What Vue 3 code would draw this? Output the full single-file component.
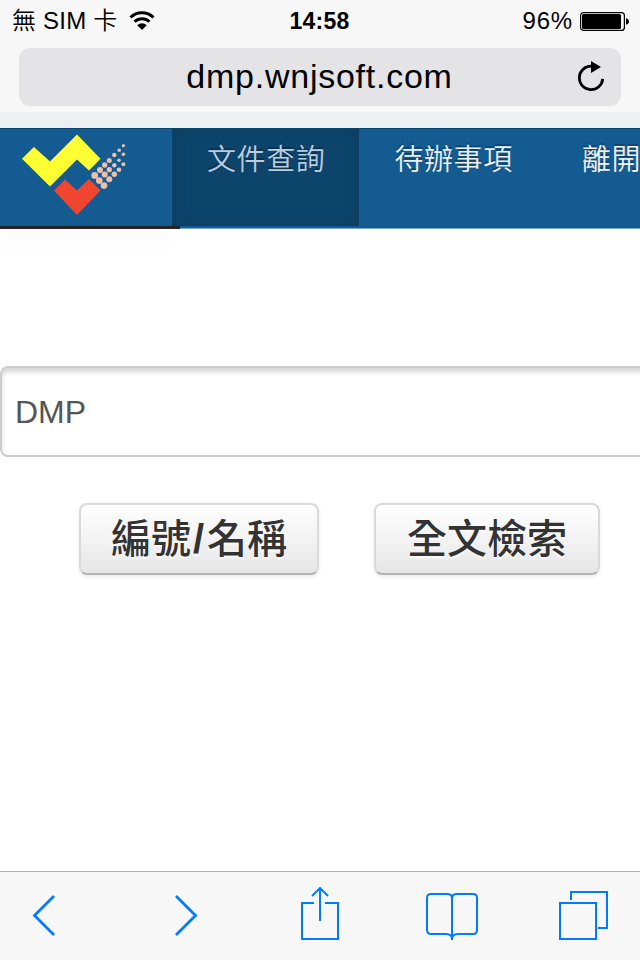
<template>
  <div class="phone">
    <header class="browser">
      <div class="status">
        <div class="carrier">
          <span>無 SIM 卡</span>
          <svg class="wifi" width="26" height="20" viewBox="0 0 26 20">
            <path d="M1.500 6.500a16.500 16.500 0 0 1 23 0" />
            <path d="M5.500 10.700a11 11 0 0 1 15 0" />
            <path class="solid" d="M8.200 14.300a6.800 6.800 0 0 1 9.600 0L13 18.900z" />
          </svg>
        </div>
        <strong class="time">14:58</strong>
        <div class="power">
          <span class="percent">96%</span>
          <svg width="49" height="19" viewBox="0 0 49 19">
            <rect class="case" x=".6" y=".6" width="43.8" height="17.8" rx="3" />
            <rect x="2" y="2" width="39" height="15" rx="1.5" />
            <path d="M46 6.2q3 .8 3 3.3t-3 3.3z" />
          </svg>
        </div>
      </div>
      <div class="address">
        <span class="url">{{ url }}</span>
        <svg class="reload" width="28" height="32" viewBox="0 0 28 32">
          <path class="ring" d="M14 5.2a11.7 11.7 0 1 0 11.7 12.6" />
          <path d="M14 0l10 6-10 6z" />
        </svg>
      </div>
    </header>

    <main class="page">
      <nav class="nav">
        <a class="logo">
          <svg width="106" height="84" viewBox="0 0 106 84">
            <path fill="#ffff33" d="M0 25.700 12 14l16 14.500L55 1.500l23.500 24.200L67 37.500 55 26.500 28 53.500z" />
            <path fill="#f0452e" d="M32 57.500 43 46.500l12 11 12-11.500 11.500 11.500L55 82z" />
            <circle v-for="(d, i) in dots" :key="i" class="dot" :cx="d[0]" :cy="d[1]" :r="d[2]" />
          </svg>
        </a>
        <a v-for="item in menu" :key="item" class="item" :class="{ active: item === current }">{{ item }}</a>
      </nav>

      <form class="search" @submit.prevent>
        <input v-model="keyword" class="keyword" type="text">
        <div class="buttons">
          <button class="btn number" type="submit">編號<b>/</b>名稱</button>
          <button class="btn fulltext" type="submit">全文檢索</button>
        </div>
      </form>
    </main>

    <footer class="toolbar">
      <svg class="arrow back" width="24" height="44" viewBox="0 0 24 44"><path d="M22 3 2.500 22.500 22 42" /></svg>
      <svg class="arrow next" width="24" height="44" viewBox="0 0 24 44"><path d="M2 3l19.500 19.500L2 42" /></svg>
      <svg class="share" width="40" height="54" viewBox="0 0 40 54">
        <path d="M14 16H2v36h36V16H25M20 34V2M12 9l8-8 8 8" />
      </svg>
      <svg class="book" width="52" height="48" viewBox="0 0 52 48">
        <path d="M26 47V5q0-4-5-4H5Q1 1 1 5v32q0 4 4 4h15q6 0 6 5 0-5 6-5h15q4 0 4-4V5q0-4-4-4H31q-5 0-5 4" />
      </svg>
      <svg class="tabs" width="50" height="50" viewBox="0 0 50 50">
        <path d="M1 12h36v36H1zM12 9V1h36v36h-9" />
      </svg>
    </footer>
  </div>
</template>

<script setup>
import { ref } from 'vue'

const url = 'dmp.wnjsoft.com'
const menu = ['文件查詢', '待辦事項', '離開']
const current = ref('文件查詢')
const keyword = ref('DMP')

// x, y, radius
const dots = [
  [72.7, 42.4, 3.4], [77.3, 47.6, 3.3], [82, 52.6, 3.3],
  [78, 37, 3], [82.7, 41.6, 3], [87.3, 46.3, 3],
  [82.7, 32, 2.7], [87.3, 36.7, 2.6], [92.3, 41.2, 2.7],
  [87.3, 27.4, 2.5], [92.3, 32.2, 2.2], [97, 36.7, 2.3],
  [92.3, 22, 2.3], [97, 27.3, 1.8], [101.4, 31.3, 2],
  [97.2, 17.2, 1.8], [101.4, 21.3, 1.8], [101.4, 12.7, 1.6],
]
</script>

<style>
body {
  margin: 0;
}
</style>

<style scoped>
.phone {
  width: 640px;
  height: 960px;
  display: flex;
  flex-direction: column;
  overflow: hidden;
  background: #fff;
  font-family: "Liberation Sans", "Noto Sans CJK TC", sans-serif;
}

.browser {
  height: 112px;
  flex: none;
  background: #f7f7f7;
}

.status {
  height: 40px;
  margin-bottom: 8px;
  padding: 1px 11px 0 12px;
  box-sizing: border-box;
  display: grid;
  grid-template-columns: 1fr auto 1fr;
  align-items: center;
  font-size: 24px;
  line-height: 40px;
}

.carrier,
.power {
  display: flex;
  align-items: center;
}

.carrier {
  gap: 12px;
  font-weight: 350;
  letter-spacing: 0.2px;
}

.power {
  justify-content: flex-end;
  gap: 7px;
}

.percent {
  letter-spacing: 0.8px;
}

.time {
  padding-right: 2px;
  font-size: 23px;
  letter-spacing: 0.2px;
}

.wifi path {
  fill: none;
  stroke: #000;
  stroke-width: 3;
}

.wifi .solid {
  fill: #000;
  stroke: none;
}

.case {
  fill: none;
  stroke: #000;
  stroke-width: 1.2;
}

.address {
  height: 58px;
  margin: 0 19px;
  padding: 0 16px;
  box-sizing: border-box;
  display: flex;
  align-items: center;
  border-radius: 11px;
  background: #e4e4e6;
}

.url {
  flex: 1;
  padding: 0 0 2px 27px;
  text-align: center;
  font-size: 34px;
  letter-spacing: 0.75px;
}

.ring {
  fill: none;
  stroke: #000;
  stroke-width: 2.8;
}

.page {
  flex: 1;
  padding-top: 16px;
  background: linear-gradient(#ecf0f3 16px, #fff 16px);
}

.nav {
  height: 101px;
  box-sizing: border-box;
  display: flex;
  border-top: 1px solid #0c4269;
  border-bottom: 1px solid #84a8c6;
  background: #135b91;
  position: relative;
}

.nav::after {
  content: "";
  position: absolute;
  left: 0;
  bottom: -1px;
  width: 180px;
  height: 3px;
  background: #222628;
  box-shadow: -8px 8px 20px rgba(0, 0, 0, 0.1);
}

.logo {
  width: 172px;
  flex: none;
  padding: 4px 0 0 22px;
  box-sizing: border-box;
}

.dot {
  fill: #f0bda6;
}

.item {
  height: 97px;
  flex: none;
  padding: 0 34px 0 35px;
  color: #eceff2;
  font-size: 29px;
  font-weight: 350;
  letter-spacing: 0.6px;
  line-height: 63px;
  text-shadow: 0 -2px 0 rgba(0, 0, 0, 0.25);
}

.item.active {
  color: #b9cde0;
  background: #0d446b;
  box-shadow: inset 0 0 16px rgba(0, 0, 0, 0.1);
}

.search {
  padding-top: 137px;
}

.keyword {
  display: block;
  width: 660px;
  height: 91px;
  box-sizing: border-box;
  padding: 1px 13px 0;
  border: 2px solid #ccc;
  border-radius: 8px;
  outline: none;
  color: #555;
  font-family: inherit;
  font-size: 32px;
  box-shadow: inset 0 4px 4px rgba(0, 0, 0, 0.16);
}

.buttons {
  display: flex;
  gap: 55px;
  padding: 46px 0 0 79px;
}

.btn {
  height: 72px;
  padding: 0;
  border: 2px solid #d9d9d9;
  border-bottom-color: #b3b3b3;
  border-radius: 8px;
  background: linear-gradient(#fff, #e6e6e6);
  color: #333;
  font-family: inherit;
  font-size: 40px;
  font-weight: 500;
  line-height: 68px;
  text-shadow: 0 2px 2px rgba(255, 255, 255, 0.75);
  box-shadow: 0 2px 4px rgba(0, 0, 0, 0.08);
}

.btn b {
  padding: 0 3px 0 2px;
}

.number {
  width: 240px;
}

.fulltext {
  width: 226px;
}

.toolbar {
  height: 89px;
  flex: none;
  box-sizing: border-box;
  display: flex;
  align-items: flex-start;
  border-top: 1px solid #b2b2b2;
  background: #f7f7f7;
}

.toolbar path {
  fill: none;
  stroke: #007aff;
  stroke-width: 2;
}

.toolbar .arrow path {
  stroke-width: 2.8;
}

.back {
  margin: 21px 0 0 32px;
}

.next {
  margin: 21px 0 0 118px;
}

.share {
  margin: 15px 0 0 102px;
}

.book {
  margin: 21px 0 0 86px;
}

.tabs {
  margin: 19px 0 0 81px;
}
</style>
